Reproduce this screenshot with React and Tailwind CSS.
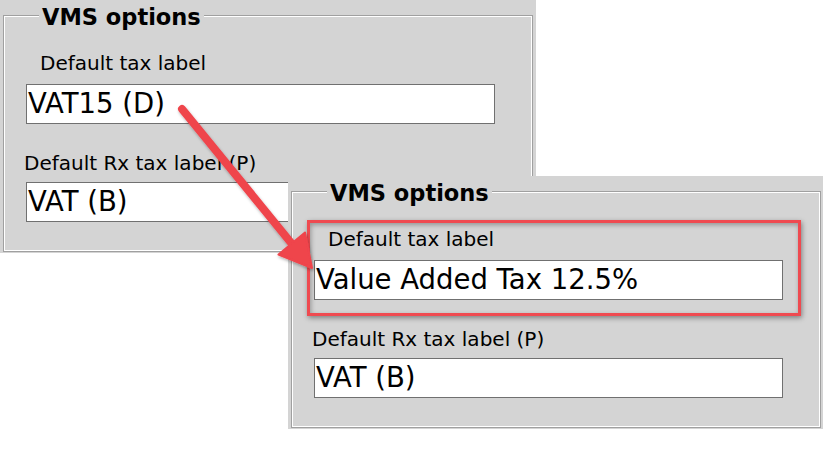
import React from "react";

const Panel = ({ className, first, second }) => (
  <div className={`w-[536px] h-[253px] bg-[#d4d4d4] pt-[16px] pl-[4px] ${className}`}>
    <div className="w-[528px] h-[235px] border border-white shadow-[0_0_0_1px_#a0a0a0]">
      <div className="-mt-[11px] ml-[34px] w-fit h-[22.5px] px-[3px] bg-[#d4d4d4] text-[22.5px] leading-none font-bold text-black">
        VMS options
      </div>
      <div className="mt-[24.5px] ml-[35px] h-[20px] text-[20px] leading-none text-black whitespace-nowrap">
        Default tax label
      </div>
      <div className="mt-[11px] ml-[21px] w-[469px] h-[40px] border border-[#707070] bg-white pt-[5px] pl-[1px] text-[27.5px] leading-none text-black whitespace-nowrap">
        {first}
      </div>
      <div className="mt-[29px] ml-[19px] h-[20px] text-[20px] leading-none text-black whitespace-nowrap">
        Default Rx tax label (P)
      </div>
      <div className="mt-[9px] ml-[21px] w-[469px] h-[40px] border border-[#707070] bg-white pt-[5px] pl-[1px] text-[27.5px] leading-none text-black whitespace-nowrap">
        {second}
      </div>
    </div>
  </div>
);

// arrow from the old value to the new one
const Arrow = () => (
  <svg className="absolute left-0 top-0 pointer-events-none" width="823" height="450" viewBox="0 0 823 450">
    <defs>
      <filter id="arrowShadow" x="-20%" y="-20%" width="140%" height="140%">
        <feDropShadow dx="1" dy="2" stdDeviation="1.5" floodColor="#000" floodOpacity="0.3" />
      </filter>
    </defs>
    <g filter="url(#arrowShadow)" fill="#ef444c" stroke="#ef444c">
      <line x1="182" y1="109" x2="292" y2="244" strokeWidth="8" strokeLinecap="round" />
      <polygon points="312,268 305,232.5 278.5,254.5" strokeWidth="2" strokeLinejoin="round" />
    </g>
  </svg>
);

export default function App() {
  return (
    <div className="relative w-[823px] h-[450px] bg-white overflow-hidden font-['DejaVu_Sans',sans-serif]">
      <Panel first="VAT15 (D)" second="VAT (B)" />
      <Panel className="absolute left-[288px] top-[176px]" first="Value Added Tax 12.5%" second="VAT (B)" />
      <div className="absolute left-[307px] top-[220px] w-[494px] h-[96px] border-[3px] border-[#ef4a50] shadow-[1px_2px_5px_rgba(0,0,0,0.4),inset_1px_2px_5px_rgba(0,0,0,0.3)]" />
      <Arrow />
    </div>
  );
}
